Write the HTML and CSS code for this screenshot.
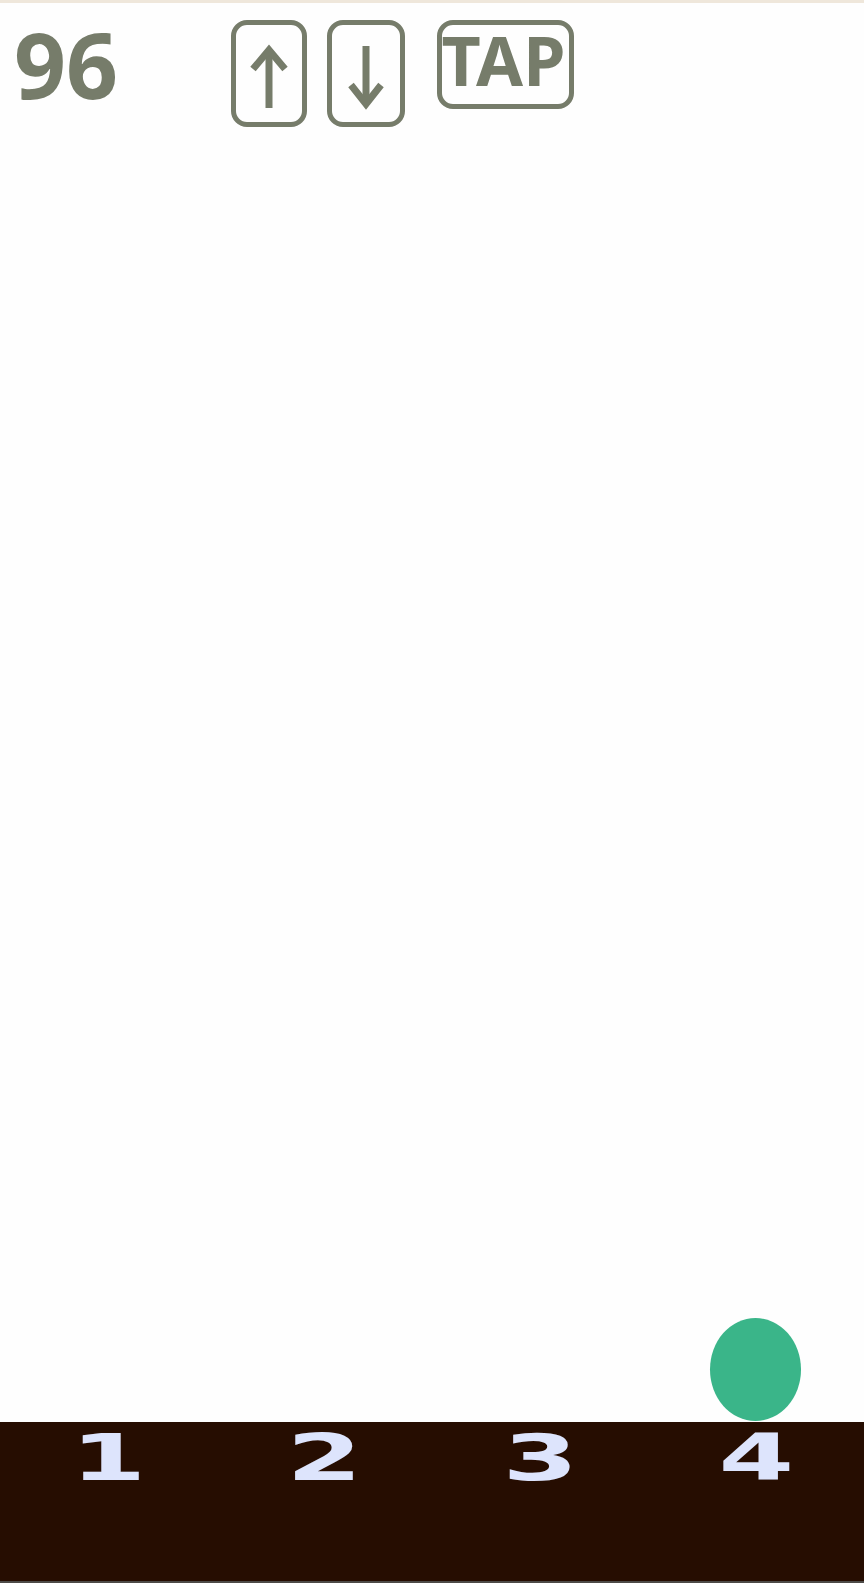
FILE: index.html
```html
<!DOCTYPE html>
<html lang="en">
<head>
<meta charset="utf-8">
<title>Game</title>
<link rel="stylesheet" href="styles.css">
</head>
<body>
<div class="app">
  <div class="topline"></div>
  <header class="header">
    <div class="score">96</div>
    <div class="controls">
      <div class="key key-up">
        <svg width="66" height="97" viewBox="0 0 66 97">
          <line x1="33" y1="25" x2="33" y2="83" class="stroke"/>
          <polyline points="17,44 33,25 49,44" class="stroke" fill="none"/>
        </svg>
      </div>
      <div class="key key-down">
        <svg width="68" height="97" viewBox="0 0 68 97">
          <line x1="34" y1="21" x2="34" y2="79" class="stroke"/>
          <polyline points="19,60 34,79 49,60" class="stroke" fill="none"/>
        </svg>
      </div>
      <div class="key key-tap"><span>TAP</span></div>
    </div>
  </header>
  <main class="field">
    <div class="ball"></div>
  </main>
  <footer class="lanes">
    <div class="lane"><span class="num">1</span></div>
    <div class="lane"><span class="num">2</span></div>
    <div class="lane"><span class="num">3</span></div>
    <div class="lane"><span class="num">4</span></div>
  </footer>
</div>
</body>
</html>
```
FILE: styles.css
```css
html, body {
  margin: 0;
  padding: 0;
  background: #fefefe;
}
.app {
  width: 864px;
  height: 1583px;
  display: flex;
  flex-direction: column;
  overflow: hidden;
}
.topline {
  height: 3px;
  background: #efe7db;
  flex: none;
}
.header {
  flex: none;
  display: flex;
  align-items: flex-start;
  height: 124px;
}
.score {
  font-family: "Noto Sans", "Open Sans", sans-serif;
  font-weight: 700;
  font-size: 91px;
  line-height: 110px;
  color: #767c6a;
  margin-top: 6px;
  margin-left: 14px;
  width: 217px;
  white-space: nowrap;
}
.controls {
  display: flex;
  align-items: flex-start;
  margin-top: 17px;
}
.key {
  box-sizing: border-box;
  border: 5px solid #767c6a;
  border-radius: 16px;
  display: flex;
}
.key-up {
  width: 76px;
  height: 107px;
}
.key-down {
  width: 78px;
  height: 107px;
  margin-left: 20px;
}
.stroke {
  stroke: #767c6a;
  stroke-width: 7;
  stroke-linecap: butt;
  stroke-linejoin: miter;
}
.key-tap {
  width: 137px;
  height: 89px;
  margin-left: 32px;
  justify-content: center;
  align-items: flex-start;
  padding-top: 1px;
}
.key-tap span {
  font-family: "Noto Sans", "Open Sans", sans-serif;
  font-weight: 700;
  font-size: 68px;
  line-height: 68px;
  color: #767c6a;
  margin-left: -4px;
}
.field {
  flex: 1;
  position: relative;
}
.ball {
  position: absolute;
  left: 710px;
  bottom: 1px;
  width: 91px;
  height: 103px;
  border-radius: 50%;
  background: #3ab589;
}
.lanes {
  flex: none;
  height: 159px;
  background: #260d01;
  border-bottom: 2px solid #4d4b48;
  display: grid;
  grid-template-columns: repeat(4, 1fr);
}
.lane {
  display: flex;
  justify-content: center;
  align-items: flex-start;
  padding-top: 4px;
}
.num {
  font-family: "DejaVu Sans", sans-serif;
  font-weight: 700;
  font-size: 64px;
  line-height: 64px;
  color: #dde4fc;
  display: inline-block;
  transform: scaleX(1.7);
}
```
